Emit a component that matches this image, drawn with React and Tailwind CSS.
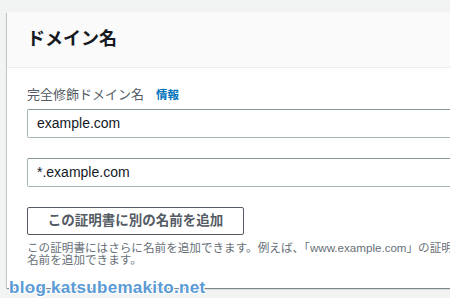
export default function App() {
  return (
    <div
      className="relative h-[298px] w-[450px] overflow-hidden bg-[#f2f3f3] pt-3 pl-[7px]"
      style={{ fontFamily: '"Liberation Sans", "Noto Sans CJK JP", sans-serif' }}
    >
      <div className="w-[900px] bg-white shadow-[0_1px_1px_0_rgba(0,28,36,0.3),1px_1px_1px_0_rgba(0,28,36,0.15),-1px_1px_1px_0_rgba(0,28,36,0.15)]">
        <div className="flex h-[56px] items-center border-b border-[#eaeded] bg-[#fafafa] px-5">
          <h2 className="text-[18px] font-bold text-[#16191f]">ドメイン名</h2>
        </div>
        <div className="px-5 pt-[18px] pb-[22px]">
          <div className="flex items-center gap-3 text-[13px] leading-[18px] text-[#545b64]">
            <span>完全修飾ドメイン名</span>
            <span className="text-[11.5px] font-bold text-[#0073bb]">情報</span>
          </div>
          <div className="mt-[5px] flex flex-col gap-5">
            <div className="flex h-[29px] items-center rounded-[2px] border border-[#aab7b8] border-t-[#879596] px-[9px] text-[14px] text-[#16191f]">
              example.com
            </div>
            <div className="flex h-[29px] items-center rounded-[2px] border border-[#aab7b8] border-t-[#879596] px-[9px] text-[14px] text-[#16191f]">
              *.example.com
            </div>
          </div>
          <button className="mt-5 flex h-[28px] w-[217px] items-center justify-center rounded-[2px] border border-[#545b64] bg-white text-[13.5px] font-bold text-[#545b64]">
            この証明書に別の名前を追加
          </button>
          <p className="mt-[7px] whitespace-nowrap text-[11.6px] leading-[12px] text-[#687078]">
            この証明書にはさらに名前を追加できます。例えば、「www.example.com」の証明書をリクエストする場合、ユーザーが「example.com」でサイトにアクセスできるように、
            <br />
            名前を追加できます。
          </p>
        </div>
      </div>
      <div
        className="absolute left-[9px] top-[275px] text-[17px] font-bold tracking-[0.3px] text-[#5b9bd5]"
        style={{ textShadow: "1px 1px 0 #fff, -1px -1px 0 #fff, 1px -1px 0 #fff, -1px 1px 0 #fff" }}
      >
        blog.katsubemakito.net
      </div>
    </div>
  );
}
